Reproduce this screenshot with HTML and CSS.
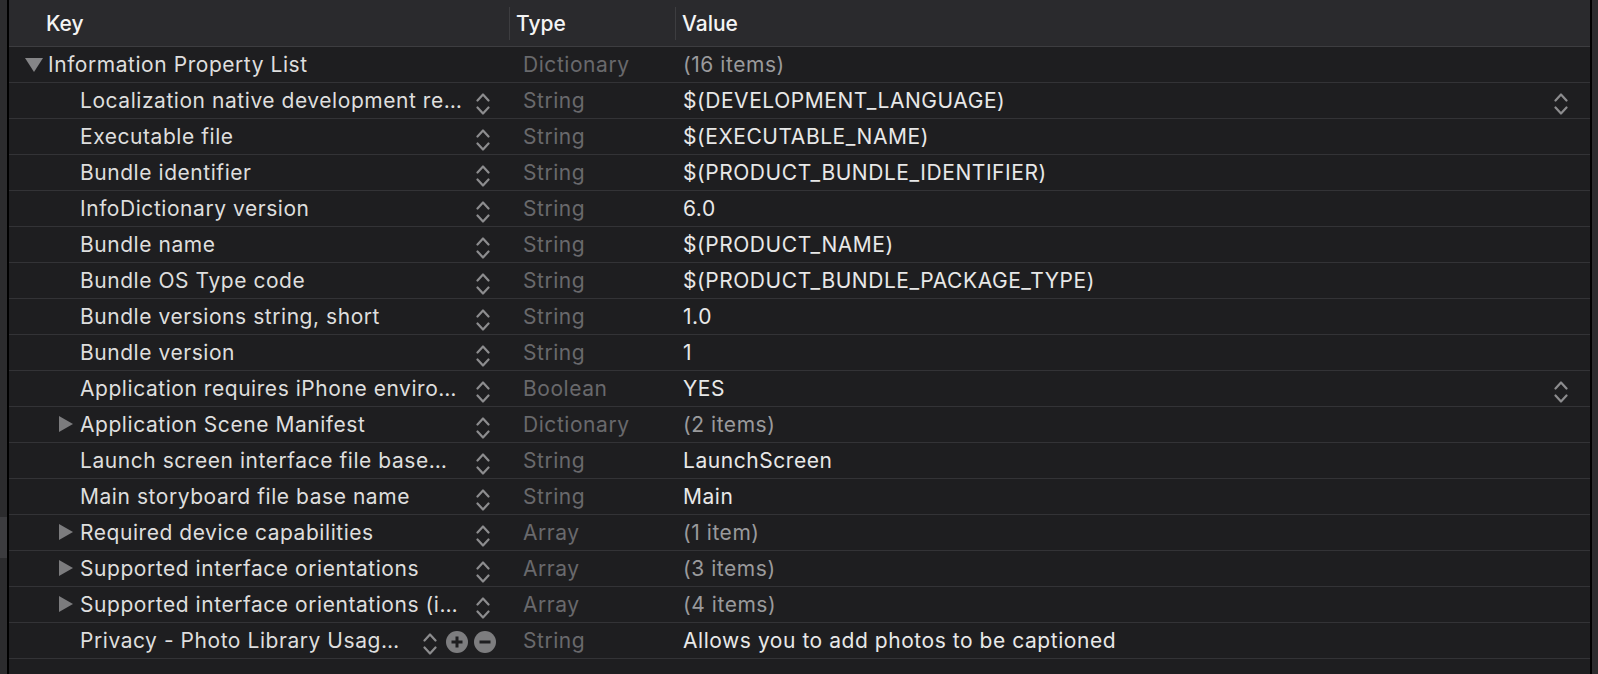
FILE: index.html
```html
<!DOCTYPE html>
<html>
<head>
<meta charset="utf-8">
<link rel="stylesheet" href="styles.css">
</head>
<body>
<div class="frame">
  <div class="gutter"><div class="thumb"></div></div>
  <div class="table">
    <div class="head">
      <div class="hcell key">Key</div>
      <div class="hcell sep">Type</div>
      <div class="hcell sep">Value</div>
    </div>

    <div class="row">
      <div class="kcell lvl0"><span class="tri down"></span><span class="ktext">Information Property List</span></div>
      <div class="tcell">Dictionary</div>
      <div class="vcell"><span class="vtext dim">(16 items)</span></div>
    </div>

    <div class="row">
      <div class="kcell lvl1"><span class="tri"></span><span class="ktext">Localization native development re…</span><span class="ctrls"><svg class="step" viewBox="0 0 14 24"><polyline points="1.5,8.5 7,2.5 12.5,8.5"/><polyline points="1.5,15.5 7,21.5 12.5,15.5"/></svg></span></div>
      <div class="tcell">String</div>
      <div class="vcell"><span class="vtext">$(DEVELOPMENT_LANGUAGE)</span><svg class="step vstep" viewBox="0 0 14 24"><polyline points="1.5,8.5 7,2.5 12.5,8.5"/><polyline points="1.5,15.5 7,21.5 12.5,15.5"/></svg></div>
    </div>

    <div class="row">
      <div class="kcell lvl1"><span class="tri"></span><span class="ktext">Executable file</span><span class="ctrls"><svg class="step" viewBox="0 0 14 24"><polyline points="1.5,8.5 7,2.5 12.5,8.5"/><polyline points="1.5,15.5 7,21.5 12.5,15.5"/></svg></span></div>
      <div class="tcell">String</div>
      <div class="vcell"><span class="vtext">$(EXECUTABLE_NAME)</span></div>
    </div>

    <div class="row">
      <div class="kcell lvl1"><span class="tri"></span><span class="ktext">Bundle identifier</span><span class="ctrls"><svg class="step" viewBox="0 0 14 24"><polyline points="1.5,8.5 7,2.5 12.5,8.5"/><polyline points="1.5,15.5 7,21.5 12.5,15.5"/></svg></span></div>
      <div class="tcell">String</div>
      <div class="vcell"><span class="vtext">$(PRODUCT_BUNDLE_IDENTIFIER)</span></div>
    </div>

    <div class="row">
      <div class="kcell lvl1"><span class="tri"></span><span class="ktext">InfoDictionary version</span><span class="ctrls"><svg class="step" viewBox="0 0 14 24"><polyline points="1.5,8.5 7,2.5 12.5,8.5"/><polyline points="1.5,15.5 7,21.5 12.5,15.5"/></svg></span></div>
      <div class="tcell">String</div>
      <div class="vcell"><span class="vtext">6.0</span></div>
    </div>

    <div class="row">
      <div class="kcell lvl1"><span class="tri"></span><span class="ktext">Bundle name</span><span class="ctrls"><svg class="step" viewBox="0 0 14 24"><polyline points="1.5,8.5 7,2.5 12.5,8.5"/><polyline points="1.5,15.5 7,21.5 12.5,15.5"/></svg></span></div>
      <div class="tcell">String</div>
      <div class="vcell"><span class="vtext">$(PRODUCT_NAME)</span></div>
    </div>

    <div class="row">
      <div class="kcell lvl1"><span class="tri"></span><span class="ktext">Bundle OS Type code</span><span class="ctrls"><svg class="step" viewBox="0 0 14 24"><polyline points="1.5,8.5 7,2.5 12.5,8.5"/><polyline points="1.5,15.5 7,21.5 12.5,15.5"/></svg></span></div>
      <div class="tcell">String</div>
      <div class="vcell"><span class="vtext">$(PRODUCT_BUNDLE_PACKAGE_TYPE)</span></div>
    </div>

    <div class="row">
      <div class="kcell lvl1"><span class="tri"></span><span class="ktext">Bundle versions string, short</span><span class="ctrls"><svg class="step" viewBox="0 0 14 24"><polyline points="1.5,8.5 7,2.5 12.5,8.5"/><polyline points="1.5,15.5 7,21.5 12.5,15.5"/></svg></span></div>
      <div class="tcell">String</div>
      <div class="vcell"><span class="vtext">1.0</span></div>
    </div>

    <div class="row">
      <div class="kcell lvl1"><span class="tri"></span><span class="ktext">Bundle version</span><span class="ctrls"><svg class="step" viewBox="0 0 14 24"><polyline points="1.5,8.5 7,2.5 12.5,8.5"/><polyline points="1.5,15.5 7,21.5 12.5,15.5"/></svg></span></div>
      <div class="tcell">String</div>
      <div class="vcell"><span class="vtext">1</span></div>
    </div>

    <div class="row">
      <div class="kcell lvl1"><span class="tri"></span><span class="ktext">Application requires iPhone enviro…</span><span class="ctrls"><svg class="step" viewBox="0 0 14 24"><polyline points="1.5,8.5 7,2.5 12.5,8.5"/><polyline points="1.5,15.5 7,21.5 12.5,15.5"/></svg></span></div>
      <div class="tcell">Boolean</div>
      <div class="vcell"><span class="vtext">YES</span><svg class="step vstep" viewBox="0 0 14 24"><polyline points="1.5,8.5 7,2.5 12.5,8.5"/><polyline points="1.5,15.5 7,21.5 12.5,15.5"/></svg></div>
    </div>

    <div class="row">
      <div class="kcell lvl1"><span class="tri right"></span><span class="ktext">Application Scene Manifest</span><span class="ctrls"><svg class="step" viewBox="0 0 14 24"><polyline points="1.5,8.5 7,2.5 12.5,8.5"/><polyline points="1.5,15.5 7,21.5 12.5,15.5"/></svg></span></div>
      <div class="tcell">Dictionary</div>
      <div class="vcell"><span class="vtext dim">(2 items)</span></div>
    </div>

    <div class="row">
      <div class="kcell lvl1"><span class="tri"></span><span class="ktext">Launch screen interface file base…</span><span class="ctrls"><svg class="step" viewBox="0 0 14 24"><polyline points="1.5,8.5 7,2.5 12.5,8.5"/><polyline points="1.5,15.5 7,21.5 12.5,15.5"/></svg></span></div>
      <div class="tcell">String</div>
      <div class="vcell"><span class="vtext">LaunchScreen</span></div>
    </div>

    <div class="row">
      <div class="kcell lvl1"><span class="tri"></span><span class="ktext">Main storyboard file base name</span><span class="ctrls"><svg class="step" viewBox="0 0 14 24"><polyline points="1.5,8.5 7,2.5 12.5,8.5"/><polyline points="1.5,15.5 7,21.5 12.5,15.5"/></svg></span></div>
      <div class="tcell">String</div>
      <div class="vcell"><span class="vtext">Main</span></div>
    </div>

    <div class="row">
      <div class="kcell lvl1"><span class="tri right"></span><span class="ktext">Required device capabilities</span><span class="ctrls"><svg class="step" viewBox="0 0 14 24"><polyline points="1.5,8.5 7,2.5 12.5,8.5"/><polyline points="1.5,15.5 7,21.5 12.5,15.5"/></svg></span></div>
      <div class="tcell">Array</div>
      <div class="vcell"><span class="vtext dim">(1 item)</span></div>
    </div>

    <div class="row">
      <div class="kcell lvl1"><span class="tri right"></span><span class="ktext">Supported interface orientations</span><span class="ctrls"><svg class="step" viewBox="0 0 14 24"><polyline points="1.5,8.5 7,2.5 12.5,8.5"/><polyline points="1.5,15.5 7,21.5 12.5,15.5"/></svg></span></div>
      <div class="tcell">Array</div>
      <div class="vcell"><span class="vtext dim">(3 items)</span></div>
    </div>

    <div class="row">
      <div class="kcell lvl1"><span class="tri right"></span><span class="ktext">Supported interface orientations (i…</span><span class="ctrls"><svg class="step" viewBox="0 0 14 24"><polyline points="1.5,8.5 7,2.5 12.5,8.5"/><polyline points="1.5,15.5 7,21.5 12.5,15.5"/></svg></span></div>
      <div class="tcell">Array</div>
      <div class="vcell"><span class="vtext dim">(4 items)</span></div>
    </div>

    <div class="row">
      <div class="kcell lvl1"><span class="tri"></span><span class="ktext">Privacy - Photo Library Usag…</span><span class="ctrls wide"><svg class="step" viewBox="0 0 14 24"><polyline points="1.5,8.5 7,2.5 12.5,8.5"/><polyline points="1.5,15.5 7,21.5 12.5,15.5"/></svg><svg class="circ" viewBox="0 0 22 22"><circle cx="11" cy="11" r="11"/><path d="M11 5.5v11M5.5 11h11"/></svg><svg class="circ" viewBox="0 0 22 22"><circle cx="11" cy="11" r="11"/><path d="M5.5 11h11"/></svg></span></div>
      <div class="tcell">String</div>
      <div class="vcell"><span class="vtext">Allows you to add photos to be captioned</span></div>
    </div>
  </div>
  <div class="rgutter"></div>
</div>
</body>
</html>
```

FILE: styles.css
```css
html, body {
  margin: 0;
  padding: 0;
  background: #1e1e20;
}
body {
  font-family: Inter, "Noto Sans", "Liberation Sans", sans-serif;
  font-size: 21px;
  color: #dcdcdc;
  overflow: hidden;
}
.frame {
  display: flex;
  width: 1598px;
  height: 674px;
}
.gutter {
  width: 7px;
  background: #2c2c2e;
  border-right: 2px solid #000;
  display: flex;
  flex-direction: column;
}
.thumb {
  margin-top: 517px;
  height: 41px;
  background: #3c3c3f;
}
.rgutter {
  width: 6px;
  background: #2c2c2e;
  border-left: 2px solid #000;
}
.table {
  flex: 1;
  background: #1e1e20;
  min-width: 0;
}
.head {
  display: grid;
  grid-template-columns: 500px 166px 1fr;
  height: 46px;
  background: #2a2a2d;
  border-bottom: 1px solid #3d3d40;
  align-items: start;
}
.hcell {
  margin-top: 7px;
  height: 33px;
  line-height: 33px;
  color: #f4f4f4;
  font-weight: 500;
  padding-left: 6px;
}
.hcell.key {
  padding-left: 37px;
}
.hcell.sep {
  border-left: 1px solid #3d3d40;
}
.row {
  display: grid;
  grid-template-columns: 500px 166px 1fr;
  height: 35px;
  border-bottom: 1px solid #333336;
  align-items: center;
  letter-spacing: 0.55px;
}
.kcell {
  display: flex;
  align-items: center;
  height: 35px;
  padding-right: 19px;
  min-width: 0;
}
.kcell.lvl0 { padding-left: 16px; }
.kcell.lvl1 { padding-left: 50px; }
.tri {
  width: 21px;
  flex: none;
  height: 17px;
  position: relative;
}
.lvl0 .tri { width: 23px; }
.tri.down::before {
  content: "";
  display: block;
  width: 0;
  height: 0;
  margin-top: 2px;
  border-left: 9px solid transparent;
  border-right: 9px solid transparent;
  border-top: 14px solid #858587;
}
.tri.right::before {
  content: "";
  display: block;
  width: 0;
  height: 0;
  border-top: 8.5px solid transparent;
  border-bottom: 8.5px solid transparent;
  border-left: 14px solid #7c7c7e;
}
.ktext {
  flex: 1;
  white-space: nowrap;
  overflow: hidden;
  color: #dedede;
}
.ctrls {
  display: flex;
  align-items: center;
  gap: 9px;
  flex: none;
}
.ctrls.wide {
  margin-right: -6px;
}
.ctrls.wide .circ + .circ {
  margin-left: -3px;
}
.step {
  width: 14px;
  height: 24px;
  margin-top: 7px;
  fill: none;
  stroke: #8c8c8e;
  stroke-width: 2.2;
  stroke-linecap: round;
  stroke-linejoin: round;
}
.circ {
  width: 22px;
  height: 22px;
  margin-top: 3px;
}
.circ circle {
  fill: #7d7d7f;
}
.circ path {
  stroke: #1e1e20;
  stroke-width: 3;
  fill: none;
}
.tcell {
  padding-left: 14px;
  color: #69696c;
  white-space: nowrap;
}
.vcell {
  display: flex;
  align-items: center;
  height: 35px;
  padding-left: 8px;
  padding-right: 22px;
}
.vtext {
  flex: 1;
  white-space: nowrap;
  color: #e8e8e8;
}
.vtext.dim {
  color: #9a9a9c;
}
.vstep {
  flex: none;
}
```
